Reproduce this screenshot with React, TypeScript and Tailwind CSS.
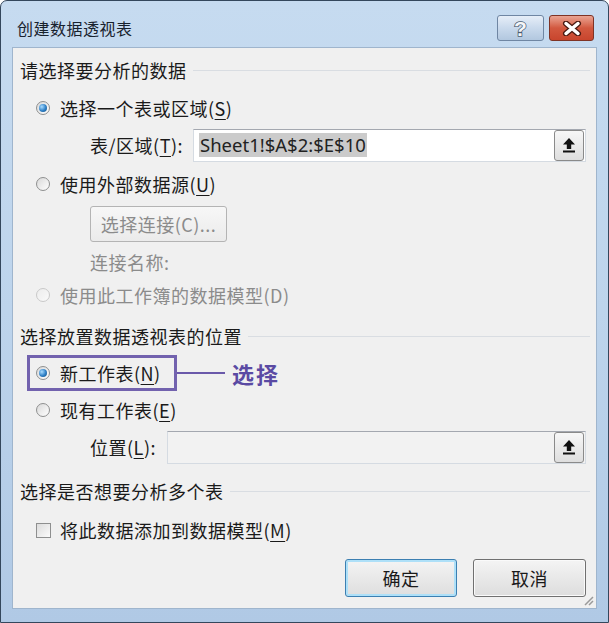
import React from "react";

const font = "font-['Noto_Sans_CJK_SC','Noto_Sans',sans-serif]";

function Radio({ checked = false, disabled = false }: { checked?: boolean; disabled?: boolean }) {
  return (
    <span
      className={
        "w-[14px] h-[14px] rounded-full border flex items-center justify-center shrink-0 " +
        (disabled
          ? "border-[#c9c9c9] bg-gradient-to-br from-[#ececec] to-[#fafafa]"
          : "border-[#8e8f8f] bg-gradient-to-br from-[#d9d9d9] to-[#ffffff]")
      }
    >
      {checked && (
        <span className="w-[8px] h-[8px] rounded-full bg-[radial-gradient(circle_at_35%_35%,#a9dcff,#2d7fc6_55%,#17507f)]" />
      )}
    </span>
  );
}

function Header({ children }: { children: React.ReactNode }) {
  return (
    <>
      <span className="text-[18px] leading-none tracking-[0.5px] text-[#1a1a1a] whitespace-nowrap">{children}</span>
      <span className="flex-1 ml-[6px] border-t border-[#d9dde2]" />
    </>
  );
}

function UploadBtn() {
  return (
    <div className="ml-auto w-[30px] h-[31px] rounded-[3px] border border-[#8a8a8a] bg-gradient-to-b from-[#f7f7f7] to-[#dedede] flex items-center justify-center">
      <svg width="14" height="16" viewBox="0 0 14 16">
        <path d="M7 1 L13 7.5 H9.2 V12 H4.8 V7.5 H1 Z" fill="#111" />
        <rect x="1" y="13.5" width="12" height="2" fill="#111" />
      </svg>
    </div>
  );
}

function U({ children }: { children: React.ReactNode }) {
  return <span className="underline underline-offset-[3px]">{children}</span>;
}

export default function App() {
  return (
    <div className={"w-[609px] h-[623px] bg-white " + font}>
      <div className="w-full h-full rounded-t-[7px] border border-[#34475c] bg-gradient-to-b from-[#c6dbf0] via-[#bdd4ec] to-[#b0c9e5] flex flex-col">
        {/* title bar */}
        <div className="h-[46px] pt-[8px] pl-[16px] pr-[14px] flex items-center justify-between">
          <span className="text-[16px] leading-none tracking-[0.5px] text-[#18222e]">创建数据透视表</span>
          <div className="flex gap-[5px]">
            <div className="w-[47px] h-[26px] rounded-[3px] border border-[#6f86a3] bg-gradient-to-b from-[#e6eef8] via-[#c9d9ec] to-[#b2c7df] flex items-center justify-center">
              <span className="text-[21px] leading-none font-bold text-[#f4f6f8] font-['Liberation_Sans',sans-serif] [-webkit-text-stroke:1.5px_#4a5b70] [paint-order:stroke_fill]">?</span>
            </div>
            <div className="w-[45px] h-[26px] rounded-[3px] border border-[#7f3325] bg-gradient-to-b from-[#e9a493] via-[#d2583f] to-[#c8452d] flex items-center justify-center">
              <svg width="20" height="15" viewBox="0 0 20 15">
                <path d="M4 2.5 L16 12.5 M16 2.5 L4 12.5" stroke="#4a1a12" strokeWidth="6" strokeLinecap="round" />
                <path d="M4 2.5 L16 12.5 M16 2.5 L4 12.5" stroke="#ffffff" strokeWidth="3.5" strokeLinecap="round" />
              </svg>
            </div>
          </div>
        </div>

        {/* client */}
        <div className="mx-[11px] mb-[13px] flex-1 border border-[#9fb5cd] bg-[#f0f0f0] relative flex flex-col text-[#1a1a1a]">
          <div className="mt-[3px] h-[38px] flex items-center pl-[7px] pr-[6px]">
            <Header>请选择要分析的数据</Header>
          </div>

          <div className="h-[38px] flex items-center pl-[23px] gap-[10px]">
            <Radio checked />
            <span className="text-[18px] leading-none tracking-[0.5px]">
              选择一个表或区域(<U>S</U>)
            </span>
          </div>

          <div className="h-[36px] flex items-center pl-[77px] pr-[10px]">
            <span className="w-[103px] text-[18px] leading-none tracking-[0.5px]">
              表/区域(<U>T</U>):
            </span>
            <div className="flex-1 h-[33px] border border-[#d5dbe2] border-t-[#a4a8b0] bg-white flex items-center pl-[5px] pr-[1px]">
              <span className="bg-[#cbcbcb] px-[1px] h-[24px] flex items-center text-[18.5px] leading-none text-[#222] font-['Noto_Sans',sans-serif]">
                Sheet1!$A$2:$E$10
              </span>
              <UploadBtn />
            </div>
          </div>

          <div className="h-[42px] flex items-center pl-[23px] gap-[10px]">
            <Radio />
            <span className="text-[18px] leading-none tracking-[0.5px]">
              使用外部数据源(<U>U</U>)
            </span>
          </div>

          <div className="h-[38px] flex items-center pl-[77px]">
            <div className="w-[137px] h-[36px] rounded-[3px] border border-[#b4b4b4] bg-gradient-to-b from-[#f7f7f7] to-[#ebebeb] flex items-center justify-center text-[18px] leading-none tracking-[0.5px] text-[#8b8b8b]">
              选择连接(C)...
            </div>
          </div>

          <div className="h-[38px] flex items-center pl-[77px] text-[18px] leading-none tracking-[0.5px] text-[#8b8b8b]">
            连接名称:
          </div>

          <div className="h-[28px] flex items-center pl-[23px] gap-[10px]">
            <Radio disabled />
            <span className="text-[18px] leading-none tracking-[0.5px] text-[#8b8b8b]">使用此工作簿的数据模型(D)</span>
          </div>

          <div className="h-[46px] pt-[8px] flex items-center pl-[7px] pr-[6px]">
            <Header>选择放置数据透视表的位置</Header>
          </div>

          <div className="h-[36px] flex items-center pl-[14px]">
            <div className="w-[150px] h-[36px] border-[3px] border-[#7262ae] flex items-center pl-[6px] gap-[10px]">
              <Radio checked />
              <span className="text-[18px] leading-none tracking-[0.5px]">
                新工作表(<U>N</U>)
              </span>
            </div>
            <span className="w-[48px] h-[2px] bg-[#6a59aa]" />
            <span className="ml-[7px] text-[22px] leading-none font-bold tracking-[2px] text-[#5a4aa3]">选择</span>
          </div>

          <div className="h-[38px] flex items-center pl-[23px] gap-[10px]">
            <Radio />
            <span className="text-[18px] leading-none tracking-[0.5px]">
              现有工作表(<U>E</U>)
            </span>
          </div>

          <div className="h-[36px] flex items-center pl-[77px] pr-[10px]">
            <span className="w-[77px] text-[18px] leading-none tracking-[0.5px]">
              位置(<U>L</U>):
            </span>
            <div className="flex-1 h-[33px] border border-[#d5dbe2] border-t-[#a4a8b0] bg-[#f2f2f2] flex items-center pr-[1px]">
              <UploadBtn />
            </div>
          </div>

          <div className="h-[52px] flex items-center pl-[7px] pr-[6px]">
            <Header>选择是否想要分析多个表</Header>
          </div>

          <div className="h-[26px] flex items-center pl-[23px] gap-[9px]">
            <span className="w-[15px] h-[15px] border border-[#8e8f8f] bg-gradient-to-br from-[#dcdcdc] to-[#fbfbfb] shrink-0" />
            <span className="text-[18px] leading-none tracking-[0.5px]">
              将此数据添加到数据模型(<U>M</U>)
            </span>
          </div>

          <div className="pt-[16px] flex justify-end pr-[10px] gap-[16px]">
            <div className="w-[112px] h-[38px] rounded-[3px] border border-[#3c7fb1] shadow-[inset_0_0_0_2px_#aee0f8] bg-gradient-to-b from-[#f4f4f4] to-[#dedede] flex items-center justify-center text-[18px] leading-none tracking-[0.5px]">
              确定
            </div>
            <div className="w-[113px] h-[38px] rounded-[3px] border border-[#707070] shadow-[inset_0_0_0_1px_#fafafa] bg-gradient-to-b from-[#f4f4f4] to-[#dddddd] flex items-center justify-center text-[18px] leading-none tracking-[0.5px]">
              取消
            </div>
          </div>

          <svg className="absolute right-[2px] bottom-[2px]" width="12" height="12" viewBox="0 0 12 12">
            <path d="M11 3 L3 11 M11 7 L7 11" stroke="#9a9a9a" strokeWidth="1.5" />
          </svg>
        </div>
      </div>
    </div>
  );
}
